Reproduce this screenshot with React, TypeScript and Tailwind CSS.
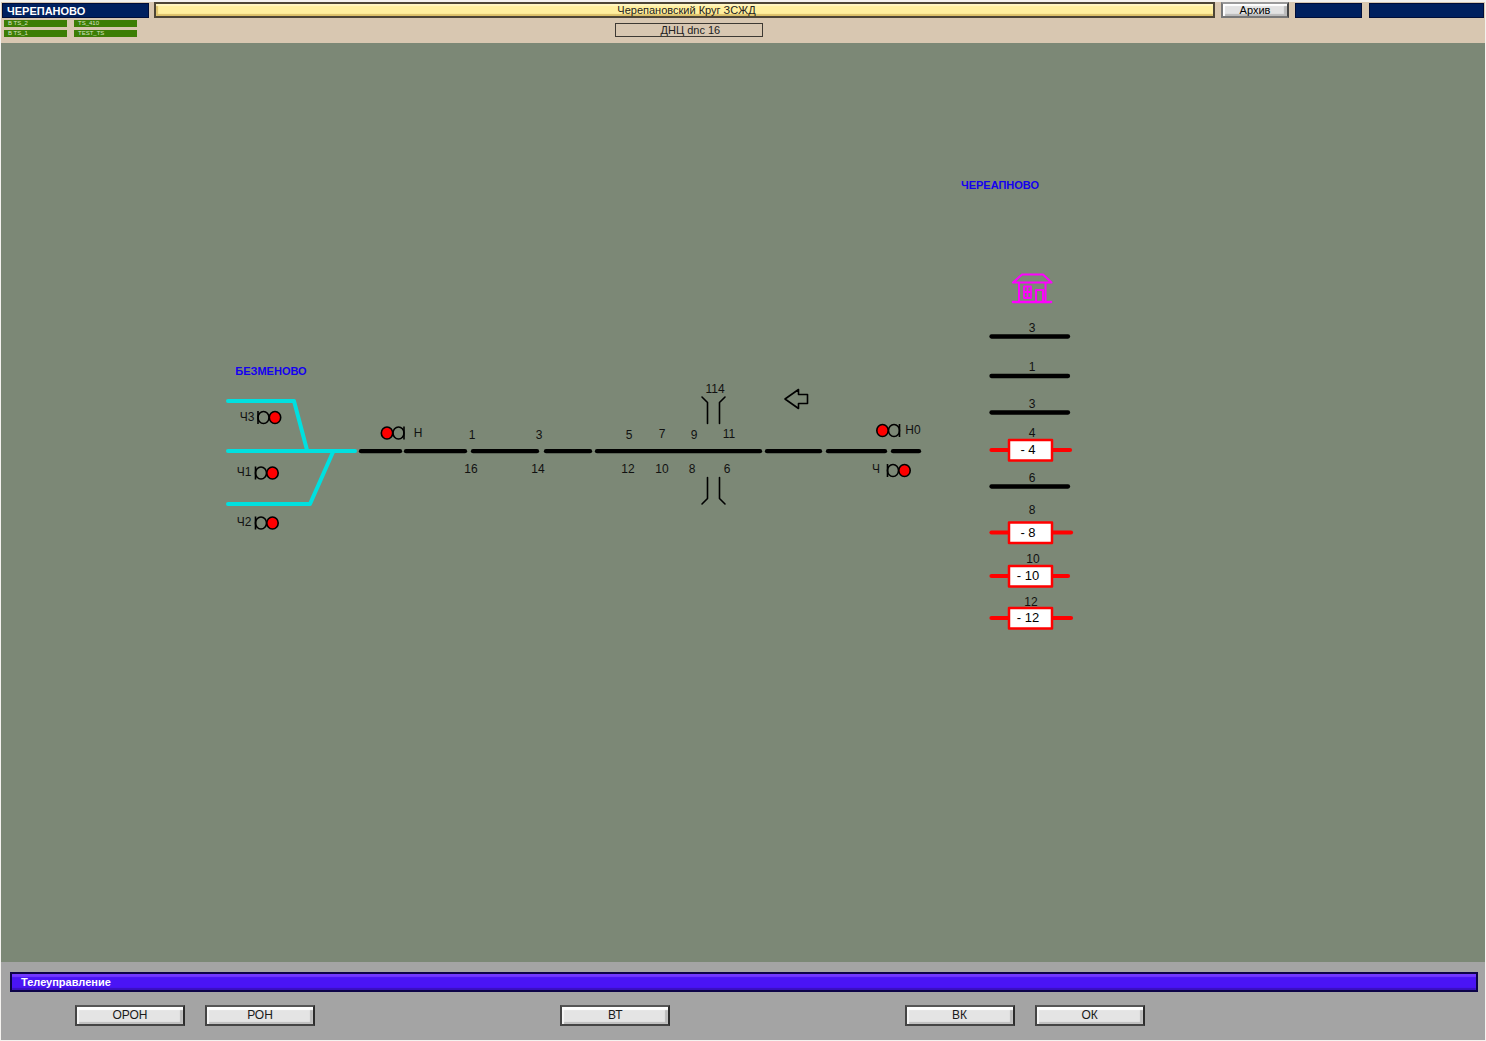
import type { ReactNode } from "react";

const CYAN = "#00e0e0";

type Label = { text: string; x: number; y: number };

const labels: Label[] = [
  { text: "Ч3", x: 247, y: 421 },
  { text: "Ч1", x: 244, y: 476 },
  { text: "Ч2", x: 244, y: 526 },
  { text: "Н", x: 418, y: 437 },
  { text: "Н0", x: 913, y: 434 },
  { text: "Ч", x: 876, y: 473 },
  { text: "1", x: 472, y: 439 },
  { text: "3", x: 539, y: 439 },
  { text: "5", x: 629, y: 439 },
  { text: "7", x: 662, y: 438 },
  { text: "9", x: 694, y: 439 },
  { text: "11", x: 729, y: 438 },
  { text: "16", x: 471, y: 473 },
  { text: "14", x: 538, y: 473 },
  { text: "12", x: 628, y: 473 },
  { text: "10", x: 662, y: 473 },
  { text: "8", x: 692, y: 473 },
  { text: "6", x: 727, y: 473 },
  { text: "114", x: 715, y: 393 },
  { text: "3", x: 1032, y: 332 },
  { text: "1", x: 1032, y: 371 },
  { text: "3", x: 1032, y: 408 },
  { text: "4", x: 1032, y: 437 },
  { text: "6", x: 1032, y: 482 },
  { text: "8", x: 1032, y: 514 },
  { text: "10", x: 1033, y: 563 },
  { text: "12", x: 1031, y: 606 },
];

const sections: [number, number][] = [
  [361, 400],
  [406, 465],
  [473, 537],
  [546, 590],
  [597, 760],
  [767, 820],
  [828, 885],
  [893, 919],
];

const freeTracks = [336.5, 376, 412.5, 486.5];

const busyTracks = [
  { y: 450, end: 1070, text: "- 4" },
  { y: 532.5, end: 1071, text: "- 8" },
  { y: 576, end: 1068, text: "- 10" },
  { y: 618, end: 1071, text: "- 12" },
];

function Signal({ x, y, flip = false }: { x: number; y: number; flip?: boolean }) {
  const d = flip ? -1 : 1;
  return (
    <g stroke="#000" strokeWidth="1.6" fill="none">
      <path d={`M${x} ${y - 6.5}V${y + 6.5}`} />
      <ellipse cx={x + d * 5.5} cy={y} rx="5.5" ry="6" />
      <ellipse cx={x + d * 17} cy={y} rx="5.7" ry="6" fill="#ff0000" />
    </g>
  );
}

function Station() {
  return (
    <g stroke="#ff00ff" fill="none" strokeWidth="2" strokeLinecap="round" strokeLinejoin="round">
      <path d="M1013 282.500H1051.500L1043 274.500H1022Z" />
      <path d="M1019 283V301M1045.500 283V301" />
      <path d="M1013 302H1051" strokeWidth="2.500" />
      <path d="M1024 286.500H1031V298H1024ZM1027.500 286.500V298M1024 292H1031" strokeWidth="1.800" />
      <path d="M1036 301V290H1043V301" />
    </g>
  );
}

function Scheme() {
  return (
    <svg
      viewBox="1 43 1484 919"
      className="block h-auto w-full font-['Liberation_Sans',Arial,sans-serif]"
      role="img"
      aria-label="Схема участка"
    >
      <g stroke={CYAN} strokeWidth="4" strokeLinecap="round" strokeLinejoin="round" fill="none">
        <path d="M228 401H294L307 450" />
        <path d="M228 451H355" />
        <path d="M228 504H310L333 452" />
      </g>
      <g stroke="#000" strokeWidth="4.300" strokeLinecap="round">
        {sections.map(([a, b]) => (
          <path key={a} d={`M${a} 451.200H${b}`} />
        ))}
        {freeTracks.map((y) => (
          <path key={y} d={`M991.500 ${y}H1068`} />
        ))}
      </g>
      <g stroke="#000" strokeWidth="1.600" fill="none" strokeLinecap="round" strokeLinejoin="round">
        <path d="M702 397L707.500 402.500V423.500M725 397L719.500 402.500V423.500" />
        <path d="M707.500 477.500V498.500L702 504M719.500 477.500V498.500L725 504" />
        <path d="M785 399L798.500 389.500V394.500H807.500V403.500H798.500V408.500Z" />
      </g>
      <Signal x={258} y={417.5} />
      <Signal x={255.5} y={473} />
      <Signal x={255.5} y={523} />
      <Signal x={887.5} y={470.5} />
      <Signal x={404} y={433} flip />
      <Signal x={899.5} y={430.5} flip />
      <Station />
      {busyTracks.map((t) => (
        <g key={t.y}>
          <path d={`M991.500 ${t.y}H${t.end}`} stroke="#ff0000" strokeWidth="4.200" strokeLinecap="round" />
          <rect x="1009" y={t.y - 10} width="43" height="20.500" fill="#fff" stroke="#ff0000" strokeWidth="2.500" strokeLinejoin="round" />
          <text x="1028" y={t.y + 4} fontSize="13" textAnchor="middle">
            {t.text}
          </text>
        </g>
      ))}
      <g fontSize="12" textAnchor="middle" fill="#111">
        {labels.map((l) => (
          <text key={`${l.x}-${l.y}`} x={l.x} y={l.y}>
            {l.text}
          </text>
        ))}
      </g>
      <g fontSize="11" fontWeight="bold" textAnchor="middle" fill="#1400f0">
        <text x="271" y="375">БЕЗМЕНОВО</text>
        <text x="1000" y="189">ЧЕРЕАПНОВО</text>
      </g>
    </svg>
  );
}

function Channel({ children }: { children: ReactNode }) {
  return <div className="h-[7px] bg-[#3c7d05] pl-1 text-[6px] leading-[7px] text-[#d5e3c2]">{children}</div>;
}

function Command({ children }: { children: ReactNode }) {
  return (
    <button
      type="button"
      className="h-[21px] w-[110px] shrink-0 border-2 border-t-[#555] border-r-[#2c2c2c] border-b-[#444] border-l-[#444] bg-[#e4e4e4] pb-px text-xs leading-4 text-[#1a1a1a] shadow-[inset_0_3px_1px_#fff,inset_2px_0_1px_#f4f4f4,inset_-3px_-2px_1px_#bcbcbc]"
    >
      {children}
    </button>
  );
}

export default function App() {
  return (
    <div className="flex min-h-screen flex-col border border-t-2 border-[#f4f2ef] bg-[#7c8876] font-['Liberation_Sans',Arial,sans-serif] text-black">
      <header className="h-[41px] bg-[#d8c7b1]">
        <div className="flex h-4 items-stretch px-px">
          <h1 className="mt-px w-[147px] shrink-0 border border-[#000d38] bg-[#00205f] pl-1 text-[11px] leading-[14px] font-bold text-white">
            ЧЕРЕПАНОВО
          </h1>
          <div className="ml-[5px] flex-1 border-2 border-[#4d4535] bg-[#ffef9e] pl-1 text-center text-[11px] leading-3 text-[#222] shadow-[inset_0_2px_1px_#fff5c0,inset_2px_-2px_1px_#dcc06a]">
            Черепановский Круг ЗСЖД
          </div>
          <button
            type="button"
            className="ml-1.5 w-[68px] border-2 border-t-[#999] border-r-[#444] border-b-[#777] border-l-[#777] bg-[#e2e2e2] text-[11px] leading-3 shadow-[inset_2px_2px_1px_#fff,inset_-3px_-2px_1px_#bbb]"
          >
            Архив
          </button>
          <div className="mt-px ml-1.5 w-[67px] border border-[#000d38] bg-[#00205f]" />
          <div className="mt-px ml-[7px] w-[115px] border border-[#000d38] bg-[#00205f]" />
        </div>
        <div className="grid grid-cols-[41.4%_148px_1fr] pt-0.5">
          <div className="grid w-[136px] grid-cols-2 gap-x-[7px] gap-y-[3px] pl-[3px]">
            <Channel>B TS_2</Channel>
            <Channel>TS_410</Channel>
            <Channel>B TS_1</Channel>
            <Channel>TEST_TS</Channel>
          </div>
          <div className="mt-[3px] h-[14px] border border-[#3d3933] pl-0.5 text-center text-[11px] leading-3 text-[#222]">
            ДНЦ dnc 16
          </div>
        </div>
      </header>

      <main className="flex-1">
        <Scheme />
      </main>

      <footer className="bg-[#a4a4a4] pt-[10px] pr-[7px] pb-[14px] pl-[9px]">
        <h2 className="h-5 border-2 border-[#0c0348] bg-[#4a14f5] pl-[9px] text-[11px] leading-4 font-bold text-white shadow-[inset_0_3px_1px_#7238ff,inset_0_-2px_1px_#3a10bd]">
          Телеуправление
        </h2>
        <div className="mt-[13px] flex pl-[65px]">
          <div className="flex gap-5">
            <Command>ОРОН</Command>
            <Command>РОН</Command>
          </div>
          <div className="grow-[245]" />
          <Command>ВТ</Command>
          <div className="grow-[234]" />
          <div className="flex gap-5">
            <Command>ВК</Command>
            <Command>ОК</Command>
          </div>
          <div className="grow-[333]" />
        </div>
      </footer>
    </div>
  );
}
